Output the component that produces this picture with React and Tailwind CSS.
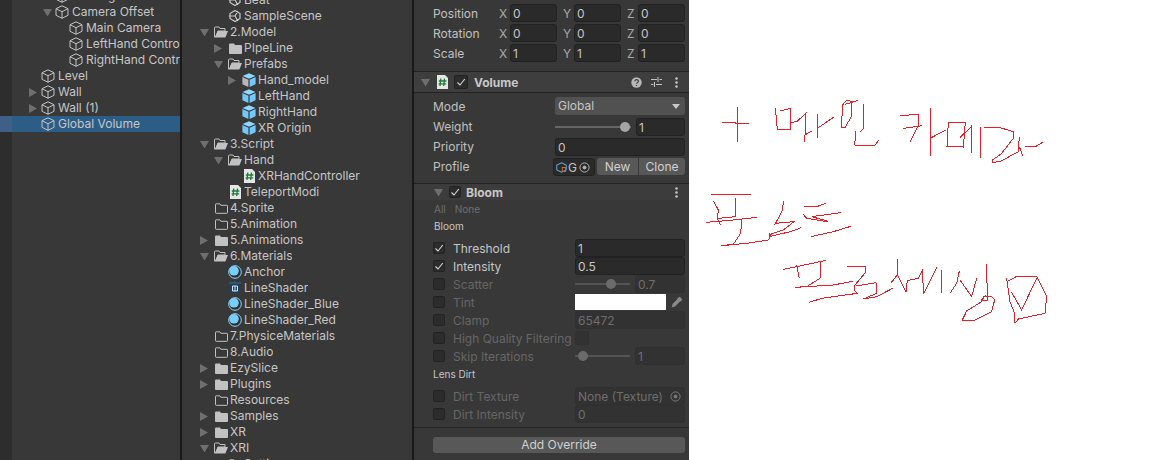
import React from 'react';

const Arrow = ({ open }) => (
  <svg width="9" height="9" viewBox="0 0 9 9" className="shrink-0">
    {open ? <path d="M0 1h9L4.5 8.5z" fill="#6f6f6f" /> : <path d="M0 0v9l8-4.5z" fill="#6f6f6f" />}
  </svg>
);

const Cube = () => (
  <svg width="14" height="14" viewBox="0 0 14 14" fill="none" stroke="#c4c4c4" strokeWidth="1">
    <path d="M7 .8 13 3.7v6.6L7 13.3 1 10.3V3.7zM1 3.7l6 3 6-3M7 6.7v6.6" />
  </svg>
);

const FolderOpen = () => (
  <svg width="14" height="12" viewBox="0 0 14 12">
    <path d="M.5 11V2a1 1 0 0 1 1-1h3.5l1 1.5h5V5H4L1.5 11z" fill="none" stroke="#c2c2c2" />
    <path d="M1 11.5 3.8 5H14l-2.6 6.5z" fill="#c2c2c2" />
  </svg>
);

const FolderClosed = () => (
  <svg width="13" height="11" viewBox="0 0 13 11">
    <path d="M0 1.5A1 1 0 0 1 1 .5h4l1 1.5h6a1 1 0 0 1 1 1V10a1 1 0 0 1-1 1H1a1 1 0 0 1-1-1z" fill="#c2c2c2" />
  </svg>
);

const FolderEmpty = () => (
  <svg width="13" height="11" viewBox="0 0 13 11" fill="none" stroke="#c2c2c2">
    <path d="M.5 1.5a.7.7 0 0 1 .7-.7h3.6l1 1.5h6a.7.7 0 0 1 .7.7v6.6a.7.7 0 0 1-.7.7H1.2a.7.7 0 0 1-.7-.7z" />
  </svg>
);

const Script = () => (
  <svg width="13" height="14" viewBox="0 0 13 14">
    <path d="M1 0h8l3 3v11H1z" fill="#e6e6e6" />
    <path d="M4.8 3.5 4 11M8.5 3.5 7.7 11M2.8 6h7.6M2.6 8.8h7.6" stroke="#1f7a3a" strokeWidth="1.3" fill="none" />
  </svg>
);

const Prefab = ({ model }) => (
  <svg width="14" height="14" viewBox="0 0 14 14">
    <path d="M7 .3 13.4 3 7 5.8.6 3z" fill="#8fd8ff" />
    <path d="M.4 4 6.4 6.7V14L.4 11.2z" fill={model ? '#b8b8b8' : '#72c8fa'} />
    <path d="M7.6 6.7 13.6 4v7.2L7.6 14z" fill="#72c8fa" />
  </svg>
);

const Material = () => (
  <svg width="14" height="14" viewBox="0 0 14 14">
    <circle cx="7" cy="7" r="6.3" fill="#2f2f2f" stroke="#8fd8ff" strokeWidth="1" />
    <circle cx="6" cy="5.8" r="4.8" fill="#78cdfb" />
  </svg>
);

const Shader = () => (
  <svg width="12" height="14" viewBox="0 0 12 14">
    <path d="M0 2h12M6 0v2" stroke="#2d6f9e" />
    <rect x="1" y="3" width="10" height="9" fill="#123f6b" />
    <path d="M3.5 5h5v5h-5zM6 5v5" stroke="#e8e8e8" fill="none" />
  </svg>
);

const UnityScene = () => (
  <svg width="14" height="14" viewBox="0 0 14 14" fill="none" stroke="#c8c8c8" strokeWidth="1.2">
    <path d="M7 1.5 12 4.5v5L7 12.5 2 9.5v-5zM.8 7H7l3-5M7 7l3 5" />
  </svg>
);

const icons = {
  cube: Cube,
  open: FolderOpen,
  closed: FolderClosed,
  empty: FolderEmpty,
  script: Script,
  prefab: Prefab,
  model: () => <Prefab model />,
  material: Material,
  shader: Shader,
  scene: UnityScene,
};

const TreeRow = ({ depth, arrow, icon, label, selected, base, hier }) => {
  const Icon = icons[icon];
  return (
    <div
      className={`relative flex h-4 shrink-0 items-center whitespace-nowrap ${selected ? 'bg-[#2c5d87]' : ''}`}
      style={{ paddingLeft: base + depth * 14 }}
    >
      {selected && <div className="absolute -left-3 top-0 h-4 w-3 bg-[#3f5f86]" />}
      <span className={`flex w-[14px] shrink-0 items-center ${hier ? 'pl-[2px]' : ''}`}>
        {arrow && <Arrow open={arrow === 'open'} />}
      </span>
      <span className="flex w-[14px] shrink-0 items-center justify-center">
        <Icon />
      </span>
      <span className={`min-w-0 overflow-hidden text-[12px] leading-4 text-[#c6c6c6] ${hier ? 'ml-[3px]' : 'ml-[2px]'}`}>
        {label}
      </span>
    </div>
  );
};

const hierarchy = [
  { depth: 2, icon: 'cube', label: 'XR Origin' },
  { depth: 2, arrow: 'open', icon: 'cube', label: 'Camera Offset' },
  { depth: 3, icon: 'cube', label: 'Main Camera' },
  { depth: 3, icon: 'cube', label: 'LeftHand Controller' },
  { depth: 3, icon: 'cube', label: 'RightHand Controller' },
  { depth: 1, icon: 'cube', label: 'Level' },
  { depth: 1, arrow: 'closed', icon: 'cube', label: 'Wall' },
  { depth: 1, arrow: 'closed', icon: 'cube', label: 'Wall (1)' },
  { depth: 1, icon: 'cube', label: 'Global Volume', selected: true },
];

const project = [
  { depth: 1, icon: 'scene', label: 'Beat' },
  { depth: 1, icon: 'scene', label: 'SampleScene' },
  { depth: 0, arrow: 'open', icon: 'open', label: '2.Model' },
  { depth: 1, arrow: 'closed', icon: 'closed', label: 'PIpeLine' },
  { depth: 1, arrow: 'open', icon: 'open', label: 'Prefabs' },
  { depth: 2, arrow: 'closed', icon: 'model', label: 'Hand_model' },
  { depth: 2, icon: 'prefab', label: 'LeftHand' },
  { depth: 2, icon: 'prefab', label: 'RightHand' },
  { depth: 2, icon: 'prefab', label: 'XR Origin' },
  { depth: 0, arrow: 'open', icon: 'open', label: '3.Script' },
  { depth: 1, arrow: 'open', icon: 'open', label: 'Hand' },
  { depth: 2, icon: 'script', label: 'XRHandController' },
  { depth: 1, icon: 'script', label: 'TeleportModi' },
  { depth: 0, icon: 'empty', label: '4.Sprite' },
  { depth: 0, icon: 'empty', label: '5.Animation' },
  { depth: 0, arrow: 'closed', icon: 'closed', label: '5.Animations' },
  { depth: 0, arrow: 'open', icon: 'open', label: '6.Materials' },
  { depth: 1, icon: 'material', label: 'Anchor' },
  { depth: 1, icon: 'shader', label: 'LineShader' },
  { depth: 1, icon: 'material', label: 'LineShader_Blue' },
  { depth: 1, icon: 'material', label: 'LineShader_Red' },
  { depth: 0, icon: 'empty', label: '7.PhysiceMaterials' },
  { depth: 0, icon: 'empty', label: '8.Audio' },
  { depth: 0, arrow: 'closed', icon: 'closed', label: 'EzySlice' },
  { depth: 0, arrow: 'closed', icon: 'closed', label: 'Plugins' },
  { depth: 0, icon: 'empty', label: 'Resources' },
  { depth: 0, arrow: 'closed', icon: 'closed', label: 'Samples' },
  { depth: 0, arrow: 'closed', icon: 'closed', label: 'XR' },
  { depth: 0, arrow: 'open', icon: 'open', label: 'XRI' },
  { depth: 1, icon: 'empty', label: 'Settings' },
];

const Field = ({ children, dim, className = '' }) => (
  <div
    className={`flex h-[18px] items-center overflow-hidden rounded-[3px] border pl-[2px] pr-[3px] pt-px text-[12px] ${
      dim ? 'border-[#303030] bg-[#323232] text-[#6e6e6e]' : 'border-[#212121] bg-[#2a2a2a] text-[#c6c6c6]'
    } ${className}`}
  >
    {children}
  </div>
);

const Vec = ({ label, values }) => (
  <div className="mb-[2px] flex h-[18px] items-center">
    <span className="w-[66px] shrink-0 pt-px text-[12px] text-[#c0c0c0]">{label}</span>
    <div className="flex flex-1 gap-[6px]">
      {['X', 'Y', 'Z'].map((axis, i) => (
        <div key={axis} className="flex flex-1 items-center">
          <span className="w-[11px] shrink-0 pt-px text-[12px] text-[#a8a8a8]">{axis}</span>
          <Field className="flex-1">{values[i]}</Field>
        </div>
      ))}
    </div>
  </div>
);

const Check = ({ on, size = 'w-3 h-3' }) => (
  <span className={`flex shrink-0 items-center justify-center rounded-[2px] border border-[#232323] bg-[#2c2c2c] ${size}`}>
    {on && (
      <svg width="10" height="10" viewBox="0 0 10 10" fill="none" stroke="#d6d6d6" strokeWidth="1.1">
        <path d="M1.5 5.5 4 8 8.8 2" />
      </svg>
    )}
  </span>
);

const Slider = ({ pos, dim, value, width = 'w-[55px]' }) => (
  <div className="flex flex-1 items-center gap-[5px]">
    <div className={`relative h-[2px] ${width} shrink-0 ${dim ? 'bg-[#555555]' : 'bg-[#666666]'}`}>
      <div
        className={`absolute -top-1 h-[10px] w-[10px] rounded-full ${dim ? 'bg-[#6b6b6b]' : 'bg-[#a5a5a5]'}`}
        style={{ left: pos }}
      />
    </div>
    <Field dim={dim} className="flex-1">{value}</Field>
  </div>
);

const OverrideRow = ({ on, label, children, className = '' }) => (
  <div className={`flex h-[18px] items-center ${className}`}>
    <Check on={on} />
    <span className={`ml-2 w-[122px] shrink-0 whitespace-nowrap pt-px text-[12px] ${on ? 'text-[#c6c6c6]' : 'text-[#666666]'}`}>
      {label}
    </span>
    <div className="flex flex-1 items-center">{children}</div>
  </div>
);

const Dots = () => (
  <svg width="3" height="11" viewBox="0 0 3 11" fill="#c4c4c4">
    <circle cx="1.5" cy="1.5" r="1.3" />
    <circle cx="1.5" cy="5.5" r="1.3" />
    <circle cx="1.5" cy="9.5" r="1.3" />
  </svg>
);

const Inspector = () => (
  <div className="flex h-[460px] w-[275px] shrink-0 flex-col overflow-hidden bg-[#383838]">
    <div className="h-[71px] shrink-0 pl-[19px] pr-[4px] pt-1">
      <Vec label="Position" values={[0, 0, 0]} />
      <Vec label="Rotation" values={[0, 0, 0]} />
      <Vec label="Scale" values={[1, 1, 1]} />
    </div>

    <div className="flex h-[22px] shrink-0 items-center border-y border-[#232323] bg-[#3e3e3e] pl-[7px] pr-[11px]">
      <Arrow open />
      <span className="ml-[6px]"><Script /></span>
      <span className="ml-[5px]"><Check on size="h-[14px] w-[14px]" /></span>
      <span className="ml-[6px] pt-px text-[12px] font-bold text-[#c8c8c8]">Volume</span>
      <svg width="11" height="11" viewBox="0 0 11 11" className="ml-auto">
        <circle cx="5.5" cy="5.5" r="5.2" fill="#b8b8b8" />
        <path d="M3.8 4.2a1.8 1.6 0 1 1 2.6 1.5c-.6.3-.9.6-.9 1.1M5.5 8v1" stroke="#3e3e3e" strokeWidth="1.2" fill="none" />
      </svg>
      <svg width="11" height="10" viewBox="0 0 11 10" stroke="#c4c4c4" className="ml-[9px]" fill="none">
        <path d="M0 2.5h6M8.5 2.5H11M0 7.5h2.5M5 7.5h6M7 0v5M3.5 5v5" />
      </svg>
      <span className="ml-[13px] flex"><Dots /></span>
    </div>

    <div className="h-[90px] shrink-0 pl-[19px] pr-[4px] pt-1">
      <div className="mb-[3px] flex h-[18px] items-center">
        <span className="w-[122px] shrink-0 pt-px text-[12px] text-[#c0c0c0]">Mode</span>
        <div className="flex h-[18px] flex-1 items-center justify-between rounded-[3px] bg-[#515151] px-[3px] text-[12px] text-[#c6c6c6]">
          Global
          <svg width="8" height="5" viewBox="0 0 8 5" className="mr-[2px]"><path d="M0 0h8L4 5z" fill="#c8c8c8" /></svg>
        </div>
      </div>
      <div className="mb-[2px] flex h-[18px] items-center">
        <span className="w-[122px] shrink-0 text-[12px] text-[#c0c0c0]">Weight</span>
        <Slider pos={65} value="1" width="w-[76px]" />
      </div>
      <div className="mb-[2px] flex h-[18px] items-center">
        <span className="w-[122px] shrink-0 text-[12px] text-[#c0c0c0]">Priority</span>
        <Field className="flex-1">0</Field>
      </div>
      <div className="flex h-[18px] items-center">
        <span className="w-[120px] shrink-0 text-[12px] text-[#c0c0c0]">Profile</span>
        <Field className="w-[42px] shrink-0 gap-[1px] !px-[2px]">
          <svg width="11" height="11" viewBox="0 0 14 14" className="shrink-0" fill="none" stroke="#5aa6d6" strokeWidth="1.3">
            <path d="M7 1 13 4v6l-6 3-6-3V4z" />
            <path d="M8 7h4v5H8z" stroke="#d0663a" />
          </svg>
          <span>G</span>
          <svg width="11" height="11" viewBox="0 0 11 11" className="ml-[1px] shrink-0" fill="none" stroke="#b4b4b4">
            <circle cx="5.5" cy="5.5" r="4.6" />
            <circle cx="5.5" cy="5.5" r="1.5" fill="#b4b4b4" />
          </svg>
        </Field>
        <div className="ml-[2px] flex h-[17px] flex-1 self-start overflow-hidden rounded-[3px] text-[12px] text-[#d0d0d0]">
          <span className="flex w-[42px] items-center justify-center border-r border-[#383838] bg-[#585858]">New</span>
          <span className="flex flex-1 items-center justify-center bg-[#585858]">Clone</span>
        </div>
      </div>
    </div>

    <div className="flex h-[17px] shrink-0 items-center border-t border-[#232323] bg-[#3c3c3c] pl-[20px] pr-[11px]">
      <Arrow open />
      <span className="ml-[6px]"><Check on /></span>
      <span className="ml-[5px] pt-px text-[12px] font-bold text-[#c8c8c8]">Bloom</span>
      <span className="ml-auto flex"><Dots /></span>
    </div>

    <div className="flex h-[39px] shrink-0 flex-col pl-[20px] pr-[4px]">
      <div className="mt-[2px] flex h-[14px] items-center gap-[9px] text-[10px] text-[#6e6e6e]">
        <span>All</span>
        <span>None</span>
      </div>
      <div className="mt-[1px] flex h-[18px] items-center text-[10px] text-[#c6c6c6]">Bloom</div>
    </div>

    <div className="flex shrink-0 flex-col pl-[19px] pr-[4px]">
      <OverrideRow on label="Threshold"><Field className="flex-1">1</Field></OverrideRow>
      <OverrideRow on label="Intensity"><Field className="flex-1">0.5</Field></OverrideRow>
      <OverrideRow label="Scatter"><Slider dim pos={31} value="0.7" /></OverrideRow>
      <OverrideRow label="Tint">
        <div className="flex h-[16px] flex-1 items-center">
          <div className="h-[16px] w-[91px] bg-white" />
          <svg width="12" height="12" viewBox="0 0 12 12" className="ml-[5px]">
            <path d="M0.8 11.2 1.5 8 6.5 3 9 5.5l-5 5z" fill="#8a8a8a" />
            <path d="M7 1.8 8.8.8l2.4 2.4-1 1.8L8.8 6 6 3.2z" fill="#8a8a8a" />
          </svg>
        </div>
      </OverrideRow>
      <OverrideRow label="Clamp"><Field dim className="flex-1">65472</Field></OverrideRow>
      <OverrideRow label="High Quality Filtering">
        <span className="h-[14px] w-[14px] rounded-[2px] border border-[#303030] bg-[#323232]" />
      </OverrideRow>
      <OverrideRow label="Skip Iterations"><Slider dim pos={3} value="1" /></OverrideRow>
      <div className="flex h-[18px] items-center pt-px text-[10px] text-[#c6c6c6]">Lens Dirt</div>
      <OverrideRow label="Dirt Texture" className="mt-1">
        <Field dim className="flex-1 justify-between">
          None (Texture)
          <svg width="11" height="11" viewBox="0 0 11 11" fill="none" stroke="#7a7a7a">
            <circle cx="5.5" cy="5.5" r="4.6" />
            <circle cx="5.5" cy="5.5" r="1.5" fill="#7a7a7a" />
          </svg>
        </Field>
      </OverrideRow>
      <OverrideRow label="Dirt Intensity"><Field dim className="flex-1">0</Field></OverrideRow>
    </div>

    <div className="mt-[4px] border-t border-[#232323] pl-[19px] pr-[4px] pt-[9px]">
      <div className="flex h-4 items-center justify-center rounded-[3px] bg-[#585858] text-[12px] text-[#d0d0d0]">
        Add Override
      </div>
    </div>
  </div>
);

// strokes read off the 3x crops, first group starts at 700,85 and second at 700,185
const upper = [
  [[66, 112], [146, 116]],
  [[113, 66], [113, 170]],
  [[226, 68], [232, 134], [270, 135], [272, 70], [240, 78]],
  [[272, 112], [290, 110], [318, 85], [314, 172]],
  [[314, 150], [335, 138]],
  [[354, 88], [352, 160]],
  [[352, 130], [402, 96]],
  [[440, 45], [428, 60], [424, 126], [436, 126], [454, 95], [456, 50], [440, 45]],
  [[436, 58], [475, 46]],
  [[490, 58], [490, 130], [482, 140]],
  [[468, 138], [464, 180], [525, 181], [536, 165]],
  [[600, 92], [655, 88], [655, 120], [630, 172]],
  [[610, 130], [666, 122]],
  [[690, 70], [690, 212]],
  [[690, 160], [738, 135]],
  [[745, 112], [741, 184], [790, 186], [796, 112], [745, 112]],
  [[780, 157], [815, 125]],
  [[814, 120], [814, 204]],
  [[841, 126], [841, 218]],
  [[852, 127], [900, 128], [940, 140], [940, 160], [905, 205], [878, 225], [878, 232], [900, 230], [955, 200], [958, 155]],
  [[958, 185], [968, 212]],
  [[975, 185], [1010, 183], [1028, 172]],
];

const lower = [
  [[33, 28], [153, 28]],
  [[40, 48], [55, 75], [52, 100], [62, 120]],
  [[108, 40], [106, 95], [55, 100]],
  [[18, 112], [100, 105], [170, 97]],
  [[125, 105], [122, 145], [100, 178], [64, 182], [140, 175], [205, 165], [215, 145]],
  [[250, 48], [248, 75], [224, 120]],
  [[210, 143], [208, 155], [270, 140], [300, 130], [304, 125]],
  [[225, 115], [282, 110], [250, 135], [210, 148]],
  [[312, 65], [350, 65], [378, 55]],
  [[310, 88], [320, 100], [380, 110], [382, 108], [335, 95], [422, 83]],
  [[333, 155], [400, 140], [452, 124]],
  [[250, 253], [290, 245], [378, 226]],
  [[290, 240], [298, 280]],
  [[362, 230], [360, 280], [320, 305], [285, 307], [400, 300], [458, 289]],
  [[442, 244], [497, 244], [497, 262], [465, 300], [462, 315], [472, 325], [400, 335], [365, 340], [328, 352]],
  [[468, 303], [528, 293], [530, 325], [490, 342], [530, 335], [578, 310]],
  [[592, 222], [592, 270], [572, 295]],
  [[592, 270], [618, 320], [622, 287], [655, 280], [668, 255], [670, 328], [712, 245]],
  [[725, 255], [725, 325]],
  [[778, 258], [770, 295], [750, 325]],
  [[780, 285], [815, 335], [830, 280]],
  [[860, 238], [862, 345], [845, 345], [858, 330]],
  [[875, 334], [850, 335], [845, 350], [800, 378], [787, 405], [825, 405], [875, 380], [884, 345], [875, 334]],
  [[920, 280], [930, 350], [942, 380], [945, 415], [955, 402], [1035, 385], [1040, 335], [1010, 275], [950, 274], [925, 288]],
  [[935, 322], [965, 375], [1010, 280]],
];

const toPoints = (stroke, oy) => stroke.map(([x, y]) => `${700 + x / 3},${oy + y / 3}`).join(' ');

const Scribble = () => (
  <svg viewBox="689 0 463 460" className="h-full w-full" fill="none" stroke="#ed1c24" strokeWidth="1" shapeRendering="crispEdges">
    {upper.map((s, i) => <polyline key={i} points={toPoints(s, 85)} />)}
    {lower.map((s, i) => <polyline key={i} points={toPoints(s, 185)} />)}
  </svg>
);

export default function App() {
  return (
    <div className="flex h-[460px] w-[1152px] overflow-hidden bg-white font-['Inter',sans-serif]">
      <div className="flex h-full w-[180px] shrink-0 overflow-hidden bg-[#383838]">
        <div className="h-full w-3 shrink-0 bg-[#2d2d2d]" />
        <div className="-mt-3 flex min-w-0 flex-1 flex-col">
          {hierarchy.map((r) => <TreeRow key={r.label} base={1} hier {...r} />)}
        </div>
      </div>
      <div className="h-full w-[2px] shrink-0 bg-[#191919]" />
      <div className="h-full w-[230px] shrink-0 overflow-hidden bg-[#383838]">
        <div className="-mt-2 flex flex-col">
          {project.map((r) => <TreeRow key={r.label + r.depth} base={18} {...r} />)}
        </div>
      </div>
      <div className="h-full w-[2px] shrink-0 bg-[#191919]" />
      <Inspector />
      <div className="h-full flex-1">
        <Scribble />
      </div>
    </div>
  );
}
